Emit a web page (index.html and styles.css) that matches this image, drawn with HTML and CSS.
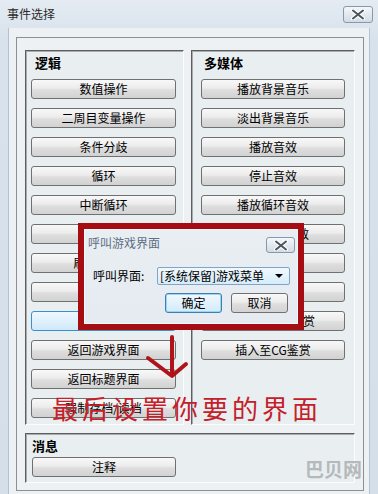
FILE: index.html
```html
<!DOCTYPE html>
<html lang="zh-CN">
<head>
<meta charset="utf-8">
<title>事件选择</title>
<link rel="stylesheet" href="styles.css">
</head>
<body>
<div class="window">
  <div class="titlebar">
    <span class="title">事件选择</span>
    <span class="close">
      <svg width="16" height="11" viewBox="0 0 16 11"><path d="M3 1.5 L13 9.5 M13 1.5 L3 9.5" stroke="#ffffff" stroke-width="4" stroke-linecap="round"/><path d="M3 1.5 L13 9.5 M13 1.5 L3 9.5" stroke="#4a5562" stroke-width="2" stroke-linecap="round"/></svg>
    </span>
  </div>
  <div class="client">
    <div class="panel">
      <div class="cols">
        <div class="group g-left">
          <div class="gtitle">逻辑</div>
          <div class="btns">
            <div class="btn">数值操作</div>
            <div class="btn">二周目变量操作</div>
            <div class="btn">条件分歧</div>
            <div class="btn">循环</div>
            <div class="btn">中断循环</div>
            <div class="btn">公共事件</div>
            <div class="btn">刷新存档栏</div>
            <div class="btn">显示菜单</div>
            <div class="btn btn-hot">呼叫界面</div>
            <div class="btn">返回游戏界面</div>
            <div class="btn">返回标题界面</div>
            <div class="btn">强制存档/读档</div>
          </div>
        </div>
        <div class="group g-right">
          <div class="gtitle">多媒体</div>
          <div class="btns">
            <div class="btn">播放背景音乐</div>
            <div class="btn">淡出背景音乐</div>
            <div class="btn">播放音效</div>
            <div class="btn">停止音效</div>
            <div class="btn">播放循环音效</div>
            <div class="btn">停止循环音效</div>
            <div class="btn">播放语音</div>
            <div class="btn">停止语音</div>
            <div class="btn">插入至音乐鉴赏</div>
            <div class="btn">插入至CG鉴赏</div>
          </div>
        </div>
      </div>
      <div class="group g-msg">
        <div class="gtitle">消息</div>
        <div class="btn">注释</div>
      </div>
    </div>
  </div>

  <div class="dlg-frame">
    <div class="dlg">
      <div class="dlg-title">
        <span class="dlg-caption">呼叫游戏界面</span>
        <span class="close dlg-close">
          <svg width="16" height="11" viewBox="0 0 16 11"><path d="M3 1.5 L13 9.5 M13 1.5 L3 9.5" stroke="#ffffff" stroke-width="4" stroke-linecap="round"/><path d="M3 1.5 L13 9.5 M13 1.5 L3 9.5" stroke="#4a5562" stroke-width="2" stroke-linecap="round"/></svg>
        </span>
      </div>
      <div class="dlg-row">
        <span class="dlg-label">呼叫界面:</span>
        <div class="combo"><span>[系统保留]游戏菜单</span><span class="caret"></span></div>
      </div>
      <div class="dlg-btns">
        <div class="btn dbtn btn-focus">确定</div>
        <div class="btn dbtn">取消</div>
      </div>
    </div>
  </div>

  <svg class="arrow" width="60" height="55" viewBox="0 0 60 55">
    <path d="M32 7 L32 45 M8 28 L32 46 L46 34" fill="none" stroke="#b0141b" stroke-width="4" stroke-linecap="round" stroke-linejoin="round"/>
  </svg>
  <div class="note">最后设置你要的界面</div>
  <div class="watermark">巴贝网</div>
</div>
</body>
</html>
```

FILE: styles.css
```css
* { box-sizing: border-box; }
html, body { margin: 0; padding: 0; }
body {
  width: 378px;
  height: 494px;
  overflow: hidden;
  font-family: "Noto Sans CJK SC", "Liberation Sans", sans-serif;
  font-size: 12px;
  color: #000;
  background: #d9e3ec;
}
.window {
  position: relative;
  width: 378px;
  height: 494px;
  background: linear-gradient(#e4ebf2, #d8e2ec 40px, #d4dfe9);
  display: flex;
  flex-direction: column;
}
.titlebar {
  height: 28px;
  flex: none;
  display: flex;
  align-items: center;
  justify-content: space-between;
  padding: 0 5px 0 7px;
}
.title {
  font-size: 12px;
  line-height: 16px;
  color: #2a2a2a;
}
.close {
  width: 30px;
  height: 17px;
  border: 1px solid #8798ab;
  border-radius: 3px;
  background: linear-gradient(#f4f7fa, #e3e9ef 50%, #d2dbe4);
  display: flex;
  align-items: center;
  justify-content: center;
}
.client {
  flex: 1;
  margin: 0 8px;
  border-left: 1px solid #b5c1cd;
  border-right: 1px solid #b5c1cd;
  background: #eef1f3;
  padding: 9px 0 0 7px;
}
.panel {
  width: 348px;
  height: 454px;
  border: 1px solid #8e8e8e;
  padding: 12px 8px 7px 8px;
  display: flex;
  flex-direction: column;
}
.cols {
  display: flex;
  gap: 7px;
  height: 375px;
}
.group {
  background: #e9eff1;
  border-top: 1px solid #5e5e5e;
  border-left: 1px solid #5e5e5e;
  border-right: 1px solid #fbfdfd;
  border-bottom: 1px solid #fbfdfd;
  box-shadow: inset 1px 1px 0 #a8acaf;
}
.g-left {
  width: 159px;
  padding: 3px 0 0 5px;
}
.g-right {
  flex: 1;
  padding: 3px 0 0 9px;
}
.gtitle {
  font-size: 13px;
  font-weight: 700;
  line-height: 18px;
  margin: 0 0 7px 4px;
}
.g-right .gtitle { margin-left: 3px; }
.btns {
  display: flex;
  flex-direction: column;
  gap: 9px;
}
.btn {
  height: 20px;
  width: 145px;
  border: 1px solid #707070;
  border-radius: 3px;
  background: linear-gradient(#f8f8f8, #ececec 45%, #dedede 55%, #d2d2d2);
  display: flex;
  align-items: center;
  justify-content: center;
  font-size: 12px;
  line-height: 16px;
  white-space: nowrap;
}
.g-right .btn { width: 144px; }
.btn-hot {
  border-color: #3c8fc8;
  background: linear-gradient(#eef7fd, #e0f1fc 50%, #cfe9fa);
}
.g-msg {
  margin-top: 8px;
  height: 50px;
  padding: 4px 0 0 5px;
}
.g-msg .gtitle {
  margin: 0 0 3px 1px;
  line-height: 16px;
}
.g-msg .btn {
  width: 144px;
  margin-left: 1px;
}

/* popup dialog */
.dlg-frame {
  position: absolute;
  left: 78px;
  top: 223px;
  width: 226px;
  height: 107px;
  border: 6px solid #a60d13;
}
.dlg {
  width: 100%;
  height: 100%;
  background: linear-gradient(#e9eef3, #e5ebf0);
  border: 1px solid #f6f9fb;
  display: flex;
  flex-direction: column;
}
.dlg-title {
  display: flex;
  justify-content: space-between;
  align-items: flex-start;
  padding: 5px 2px 0 3px;
}
.dlg-caption {
  font-size: 12px;
  line-height: 16px;
  color: #5d6f82;
}
.dlg-close {
  width: 29px;
  height: 16px;
  margin-top: 2px;
}
.dlg-row {
  display: flex;
  align-items: center;
  margin-top: 14px;
  padding-left: 8px;
}
.dlg-label {
  width: 64px;
  font-size: 12px;
  line-height: 16px;
}
.combo {
  width: 133px;
  height: 18px;
  border: 1px solid #7fa6c8;
  border-radius: 2px;
  background: linear-gradient(#f1f8fd, #e3f2fc 50%, #d6ecfa);
  display: flex;
  align-items: center;
  justify-content: space-between;
  padding: 0 6px 0 2px;
  font-size: 12px;
  line-height: 16px;
  white-space: nowrap;
}
.caret {
  width: 0;
  height: 0;
  border-left: 4px solid transparent;
  border-right: 4px solid transparent;
  border-top: 4px solid #000;
}
.dlg-btns {
  display: flex;
  justify-content: flex-end;
  gap: 9px;
  margin-top: 8px;
  padding-right: 9px;
}
.dbtn {
  width: 57px;
}
.btn-focus {
  border-color: #3c7fb1;
  background: linear-gradient(#f0f8fd, #e2f2fc 50%, #d2ebfa);
  box-shadow: inset 0 0 0 1px #9fd3f3;
}

/* annotations */
.arrow {
  position: absolute;
  left: 140px;
  top: 330px;
}
.note {
  position: absolute;
  left: 52px;
  top: 393px;
  font-size: 26px;
  line-height: 30px;
  letter-spacing: 4px;
  color: #c5202a;
  white-space: nowrap;
}
.watermark {
  position: absolute;
  left: 305px;
  top: 458px;
  font-size: 19px;
  line-height: 22px;
  font-weight: 700;
  color: #b5b9bc;
  white-space: nowrap;
}
```
